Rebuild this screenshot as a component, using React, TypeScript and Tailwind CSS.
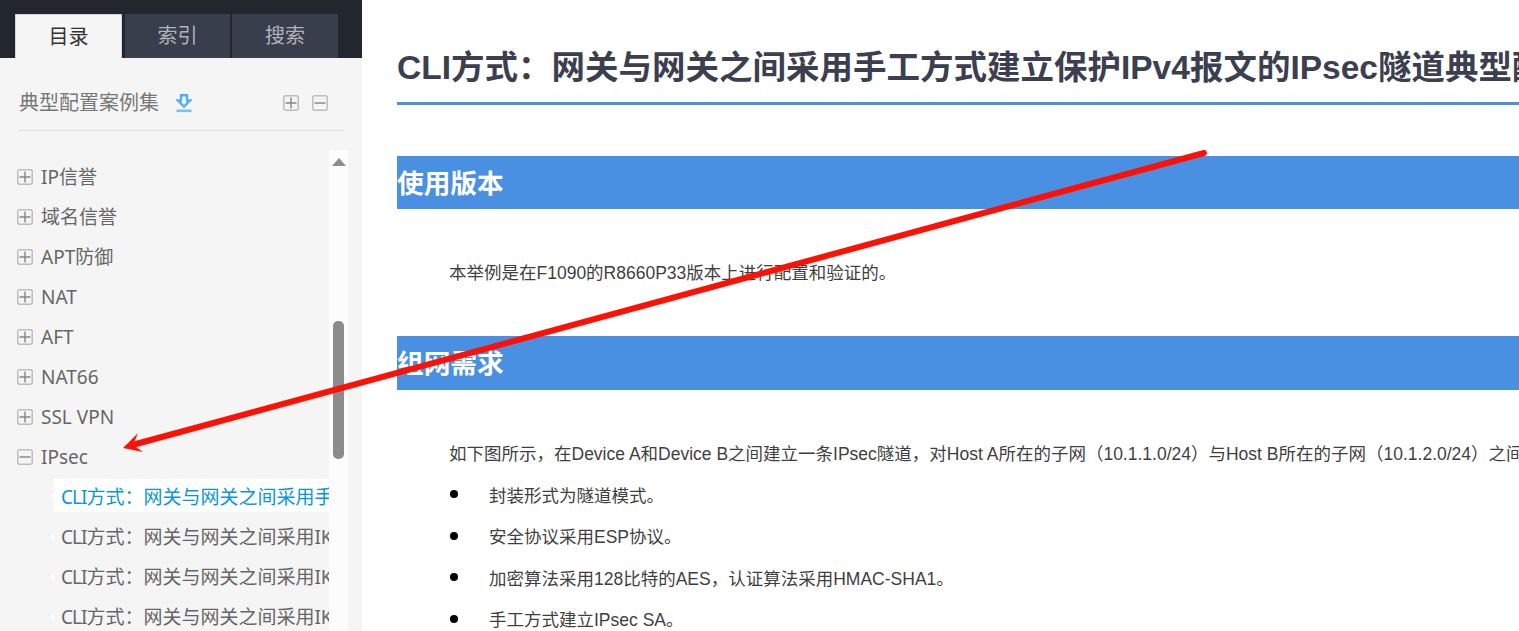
const treeRows = ['IP信誉', '域名信誉', 'APT防御', 'NAT', 'AFT', 'NAT66', 'SSL VPN'];

const subRows = [
  { label: '方式：网关与网关之间采用手工', active: true },
  { label: '方式：网关与网关之间采用IKE', active: false },
  { label: '方式：网关与网关之间采用IKE', active: false },
  { label: '方式：网关与网关之间采用IKE', active: false },
];

const bullets = ['封装形式为隧道模式。', '安全协议采用ESP协议。', '加密算法采用128比特的AES，认证算法采用HMAC-SHA1。', '手工方式建立IPsec SA。'];

const BoxIcon = ({ open }: { open: boolean }) => (
  <svg width="16" height="16" viewBox="0 0 16 16" className="shrink-0">
    <rect x="0.75" y="0.75" width="14.5" height="14.5" rx="2" fill="none" stroke="#bdbdbd" strokeWidth="1.5" />
    <path d={open ? 'M2.5 8H13.5' : 'M2.5 8H13.5M8 2.5V13.5'} stroke="#858585" strokeWidth="1.4" fill="none" />
  </svg>
);

const App = () => {
  return (
    <div className="relative flex h-[631px] w-[1519px] overflow-hidden bg-white font-['Liberation_Sans','Noto_Sans_CJK_SC',sans-serif]">
      {/* Sidebar */}
      <aside className="flex w-[362px] shrink-0 flex-col bg-[#f5f5f5] font-['Noto_Sans','Noto_Sans_CJK_SC',sans-serif]">
        <div className="flex h-[58px] items-end gap-[3px] bg-[#22262f] pl-[15px]">
          <div className="flex h-[44px] w-[107px] items-center justify-center border-x border-t border-[#d5d5d5] bg-[#f5f5f5] text-[20px] text-[#333]">目录</div>
          <div className="flex h-[44px] w-[105px] items-center justify-center bg-[#383e4b] text-[20px] text-[#b0b3b9]">索引</div>
          <div className="ml-[-1px] flex h-[44px] w-[106px] items-center justify-center bg-[#383e4b] text-[20px] text-[#b0b3b9]">搜索</div>
        </div>

        <div className="mr-[18px] ml-[19px] flex h-[73px] items-center justify-between border-b border-[#dedede] pt-[34px] pr-[16px] pb-[16px]">
          <div className="flex items-center gap-[17px]">
            <span className="text-[20px] leading-none text-[#777]">典型配置案例集</span>
            <svg width="16" height="19" viewBox="0 0 16 19">
              <path d="M5 1.2H11V6.5H14L8 12.5L2 6.5H5Z" fill="none" stroke="#55aef5" strokeWidth="2.4" />
              <path d="M0.5 16.8H15.5" stroke="#7cc0f7" strokeWidth="2.6" />
            </svg>
          </div>
          <div className="flex gap-[13px]">
            <BoxIcon open={false} />
            <BoxIcon open={true} />
          </div>
        </div>

        <div className="flex min-h-0 flex-1 pt-[19px] pr-[14px]">
          <div className="min-w-0 flex-1 overflow-hidden pl-[17px] pt-[7px]">
            {treeRows.map((row) => (
              <div key={row} className="flex h-[40px] items-center gap-[8px] text-[19px] text-[#666]">
                <BoxIcon open={false} />
                <span>{row}</span>
              </div>
            ))}
            <div className="flex h-[40px] items-center gap-[8px] text-[19px] text-[#666]">
              <BoxIcon open={true} />
              <span>IPsec</span>
            </div>
            {subRows.map((row, i) => (
              <div key={i} className="ml-[35px] flex h-[40px] items-start pt-[2px]">
                <span className="mt-[15px] h-[6px] w-[2px] shrink-0 bg-white" />
                <div className={`h-[33px] min-w-0 flex-1 overflow-hidden pl-[7px] text-[19px] leading-[37px] whitespace-nowrap ${row.active ? 'bg-white text-[#0a96d8]' : 'text-[#666]'}`}>
                  <span className="tracking-[-1px]">CLI</span>
                  {row.label}
                </div>
              </div>
            ))}
          </div>
          <div className="flex w-[19px] shrink-0 flex-col items-center bg-[#fcfcfc] pt-[8px]">
            <svg width="14" height="8" viewBox="0 0 14 8" className="shrink-0">
              <path d="M7 0L14 8H0Z" fill="#8c8c8c" />
            </svg>
            <div className="mt-[155px] h-[138px] w-[11px] shrink-0 rounded-[5px] bg-[#8c8c8c]" />
          </div>
        </div>
      </aside>

      {/* Content */}
      <main className="min-w-0 flex-1 overflow-hidden pl-[35px] text-[#3f3f3f]">
        <div className="w-[1400px]">
          <h1 className="mt-[42px] h-[63px] border-b-[3px] border-[#4a90e2] text-[33.5px] leading-[52px] font-bold whitespace-nowrap text-[#3b3f4f]">
            CLI方式：网关与网关之间采用手工方式建立保护IPv4报文的IPsec隧道典型配置举例
          </h1>
          <h2 className="mt-[51px] h-[53px] bg-[#4a90e2] text-[26.7px] leading-[57px] font-bold text-white">使用版本</h2>
          <p className="mt-[52px] pl-[52px] text-[17.5px] leading-[24px] whitespace-nowrap">本举例是在F1090的R8660P33版本上进行配置和验证的。</p>
          <h2 className="mt-[51px] h-[54px] bg-[#4a90e2] text-[26.7px] leading-[57px] font-bold text-white">组网需求</h2>
          <p className="mt-[52px] pl-[52px] text-[17.5px] leading-[24px] whitespace-nowrap">
            如下图所示，在Device A和Device B之间建立一条IPsec隧道，对Host A所在的子网（10.1.1.0/24）与Host B所在的子网（10.1.2.0/24）之间
          </p>
          <ul className="mt-[9px] pl-[52px]">
            {bullets.map((item) => (
              <li key={item} className="flex h-[41.5px] items-center text-[17.5px] whitespace-nowrap">
                <span className="mr-[31px] mb-[3px] ml-[1px] h-[8px] w-[8px] rounded-full bg-black" />
                {item}
              </li>
            ))}
          </ul>
        </div>
      </main>

      {/* Annotation arrow */}
      <svg className="pointer-events-none absolute inset-0" width="1519" height="631" viewBox="0 0 1519 631">
        <path d="M1204 153L136 444" stroke="#ff1005" strokeWidth="6" strokeLinecap="round" fill="none" />
        <path d="M123 448L138 433L133 445L143 452Z" fill="#ff1005" />
      </svg>
    </div>
  );
};

export default App;
